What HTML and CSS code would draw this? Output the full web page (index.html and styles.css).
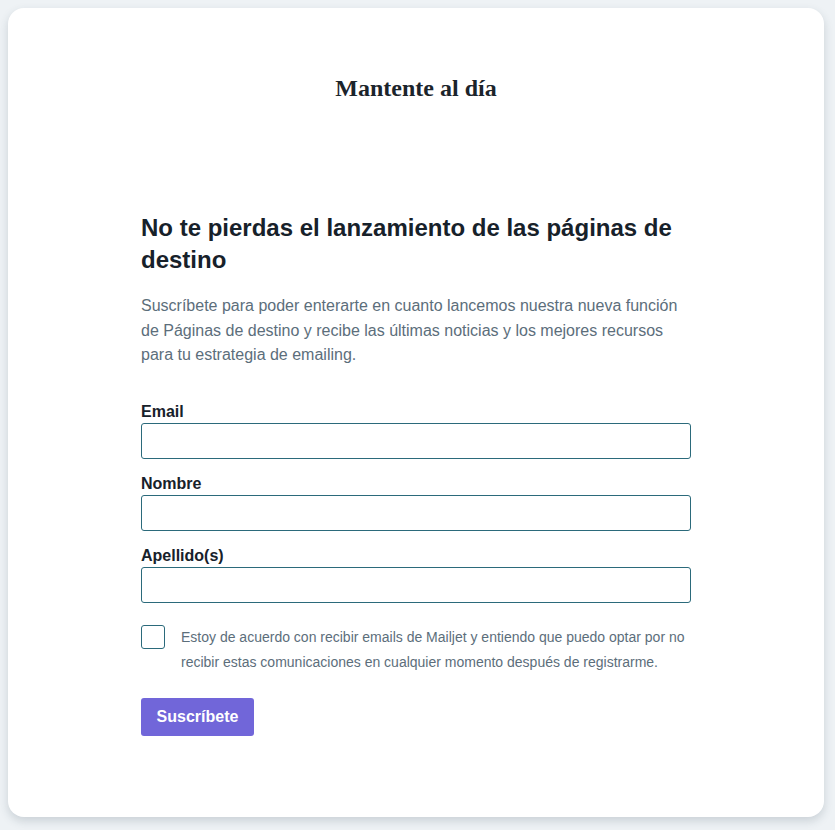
FILE: index.html
```html
<!DOCTYPE html>
<html lang="es">
<head>
    <meta charset="UTF-8">
    <meta name="viewport" content="width=device-width, initial-scale=1.0">
    <title>Mantente al día</title>
    <link rel="stylesheet" href="styles.css">
</head>
<body>

    <div class="card">
        <h1 class="card-title">Mantente al día</h1>

        <form class="signup-form">
            <h2 class="form-heading">No te pierdas el lanzamiento de las páginas de destino</h2>
            <p class="form-intro">Suscríbete para poder enterarte en cuanto lancemos nuestra nueva función de Páginas de destino y recibe las últimas noticias y los mejores recursos para tu estrategia de emailing.</p>

            <div class="field">
                <label for="email">Email</label>
                <input type="email" id="email">
            </div>
            <div class="field">
                <label for="nombre">Nombre</label>
                <input type="text" id="nombre">
            </div>
            <div class="field">
                <label for="apellido">Apellido(s)</label>
                <input type="text" id="apellido">
            </div>

            <label class="consent">
                <input type="checkbox" class="consent-box">
                <span class="consent-text">Estoy de acuerdo con recibir emails de Mailjet y entiendo que puedo optar por no recibir estas comunicaciones en cualquier momento después de registrarme.</span>
            </label>

            <button type="submit" class="submit-button">Suscríbete</button>
        </form>
    </div>

</body>
</html>
```

FILE: styles.css
```css
html, body {
    height: 100%;
}

body {
    margin: 0;
    padding: 8px 11px 13px 8px;
    box-sizing: border-box;
    background-color: #eef2f5;
    font-family: "Liberation Sans", Arial, sans-serif;
    color: #1b242b;
}

.card {
    height: 100%;
    background: #fff;
    border-radius: 16px;
    box-shadow: 0 4px 10px rgba(40, 60, 75, 0.18);
    padding-top: 65px;
    box-sizing: border-box;
}

.card-title {
    margin: 0;
    text-align: center;
    font-family: "Liberation Serif", "Times New Roman", serif;
    font-weight: bold;
    font-size: 24px;
    line-height: 30px;
    color: #1b242b;
}

.signup-form {
    width: 550px;
    margin: 109px auto 0;
}

.form-heading {
    margin: 0;
    font-size: 24px;
    line-height: 32px;
    font-weight: bold;
    color: #17212a;
}

.form-intro {
    margin: 18px 0 34px;
    font-size: 16px;
    line-height: 24.5px;
    color: #5c6e7b;
}

.field {
    display: flex;
    flex-direction: column;
    margin-bottom: 15px;
}

.field label {
    font-size: 16px;
    font-weight: bold;
    line-height: 20px;
    margin-bottom: 1px;
    color: #17212a;
}

.field input {
    height: 36px;
    box-sizing: border-box;
    border: 1px solid #2b6a7b;
    border-radius: 3px;
    padding: 0 10px;
    font-size: 16px;
    font-family: inherit;
    outline: none;
}

.consent {
    display: flex;
    align-items: flex-start;
    gap: 16px;
    margin-top: 22px;
}

.consent-box {
    appearance: none;
    -webkit-appearance: none;
    flex: 0 0 24px;
    width: 24px;
    height: 24px;
    margin: 0;
    border: 1px solid #2b6a7b;
    border-radius: 3px;
    background: #fff;
}

.consent-text {
    font-size: 14px;
    line-height: 25px;
    color: #5c6e7b;
}

.submit-button {
    margin-top: 23px;
    width: 113px;
    height: 38px;
    border: none;
    border-radius: 3px;
    background-color: #7166d9;
    color: #fff;
    font-family: inherit;
    font-size: 16px;
    font-weight: bold;
    cursor: pointer;
}
```
